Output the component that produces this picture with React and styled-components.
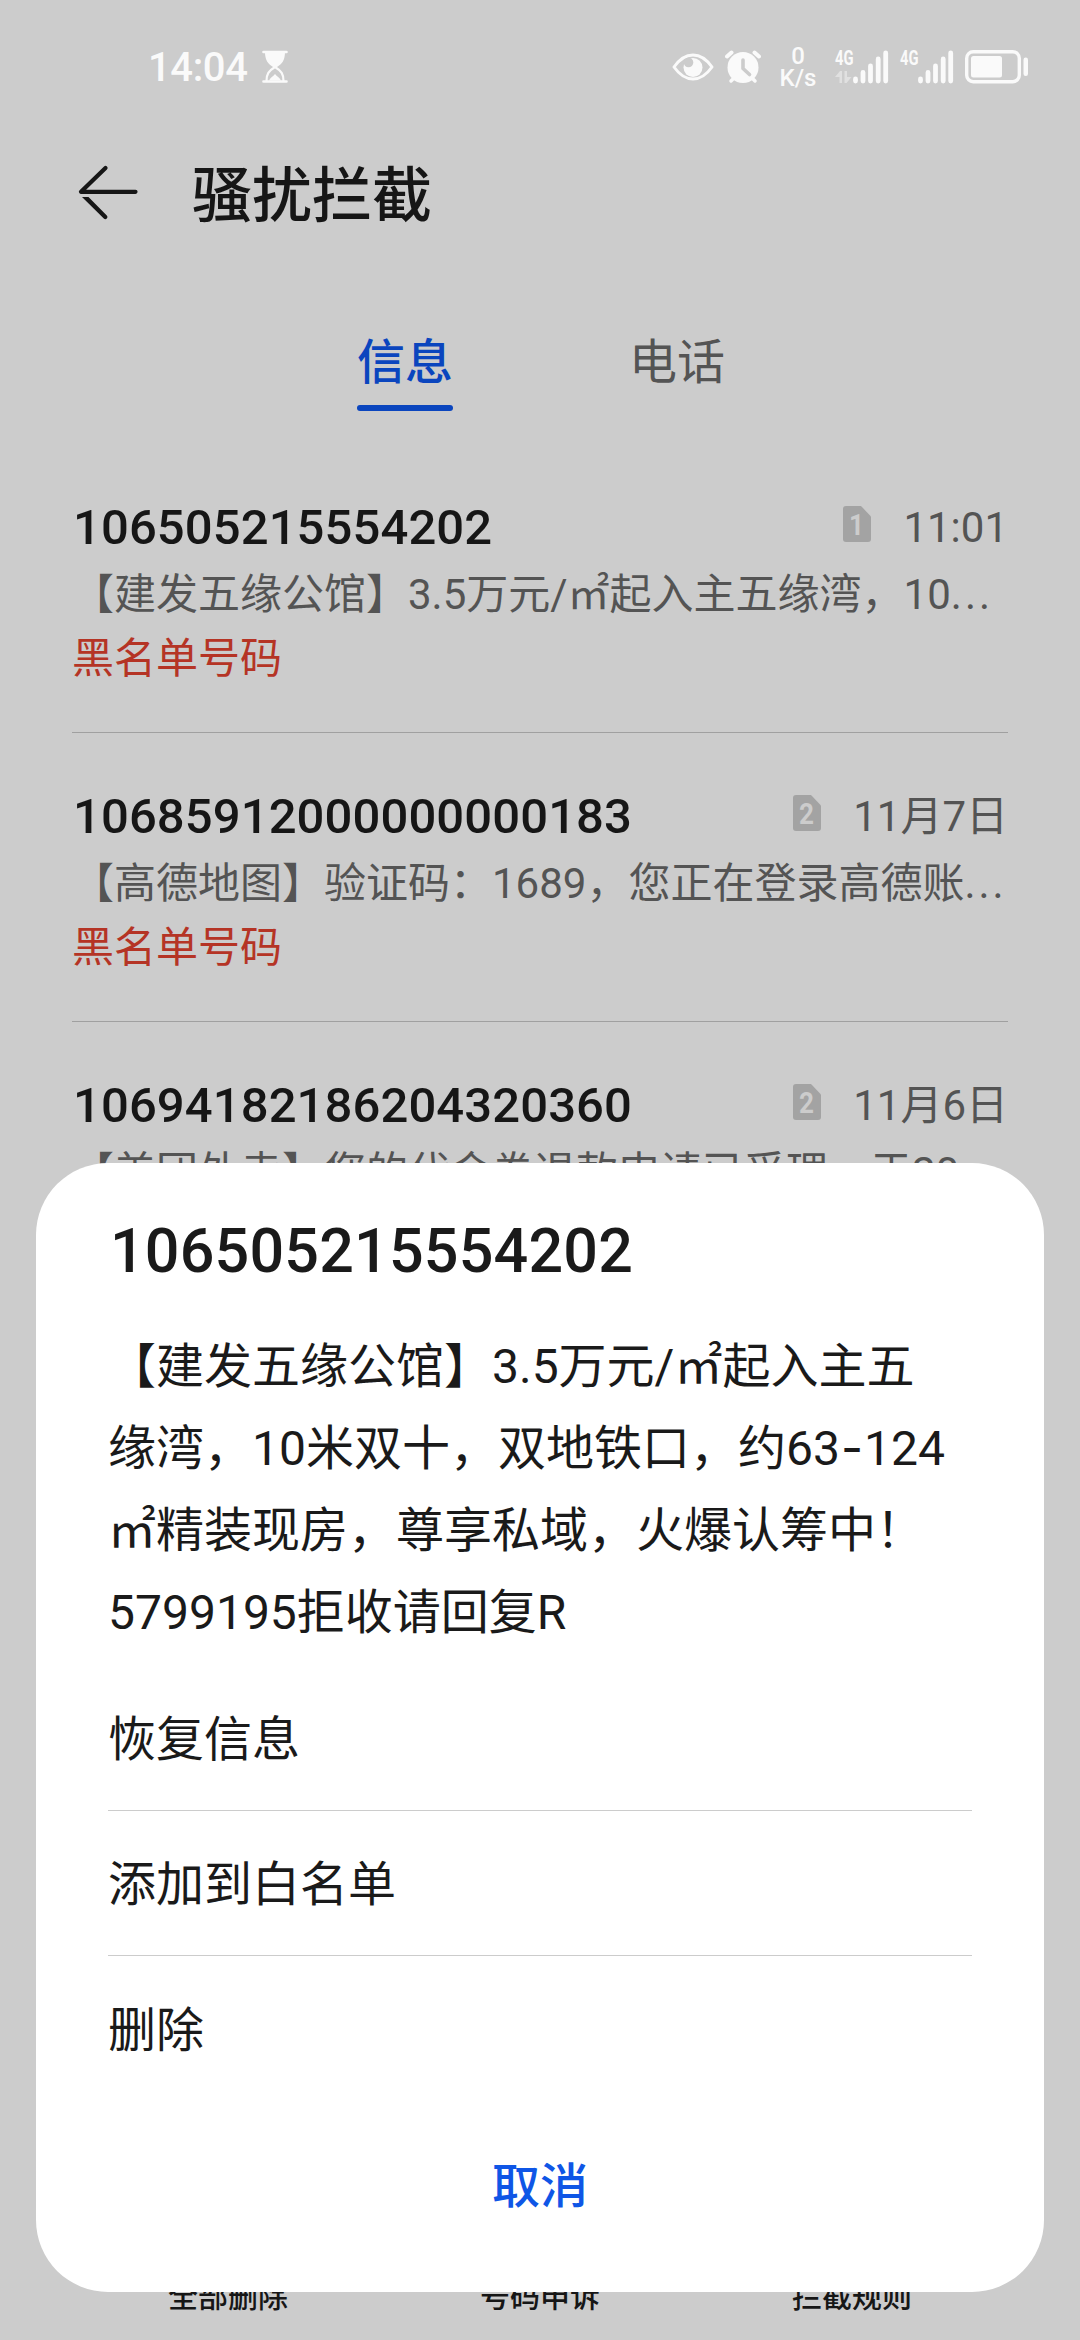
import React, { useState } from 'react'
import styled, { createGlobalStyle } from 'styled-components'

const messages = [
  {
    id: 1,
    number: '106505215554202',
    sim: 1,
    time: '11:01',
    preview: '【建发五缘公馆】3.5万元/㎡起入主五缘湾，10',
    tag: '黑名单号码',
  },
  {
    id: 2,
    number: '10685912000000000183',
    sim: 2,
    time: '11月7日',
    preview: '【高德地图】验证码：1689，您正在登录高德账',
    tag: '黑名单号码',
  },
  {
    id: 3,
    number: '10694182186204320360',
    sim: 2,
    time: '11月6日',
    preview: '【美团外卖】您的代金券退款申请已受理，于20',
    tag: '黑名单号码',
  },
]

const Hourglass = () => (
  <svg width="26" height="34" viewBox="0 0 26 34" fill="none">
    <path d="M1.5 2h23M1.5 31.5h23" stroke="#fafafa" strokeWidth="2.6" strokeLinecap="round" />
    <path d="M3 2h20c0 8-3 12-8 15h-4C6 14 3 10 3 2z" fill="#fafafa" />
    <path d="M4.5 31c0-7 2-10 8.5-14c6.5 4 8.5 7 8.5 14" stroke="#fafafa" strokeWidth="2.2" />
    <path d="M7 30.5c1.5-3 4-4 6-6.5c2 2.5 4.5 3.5 6 6.5z" fill="#fafafa" />
  </svg>
)

const Eye = () => (
  <svg width="42" height="28" viewBox="0 0 42 28" fill="none">
    <path d="M2 14C8 5.5 14 2 21 2s13 3.500 19 12c-6 8.500-12 12-19 12S8 22.500 2 14z" stroke="#fafafa" strokeWidth="3" strokeLinejoin="round" />
    <circle cx="21" cy="14.500" r="9.500" fill="#fafafa" />
    <circle cx="16.500" cy="9.500" r="4.800" fill="#cccccc" />
  </svg>
)

const Alarm = () => (
  <svg width="36" height="34" viewBox="0 0 36 34" fill="none">
    <circle cx="18" cy="17.5" r="15.5" fill="#fafafa" />
    <path d="M6 31l4-4M30 31l-4-4" stroke="#fafafa" strokeWidth="3.5" strokeLinecap="round" />
    <path d="M2 6.5L6.5 2.5M34 6.5L29.5 2.5" stroke="#fafafa" strokeWidth="4" strokeLinecap="round" />
    <path d="M18 10v8.5l6.5 6" stroke="#cccccc" strokeWidth="3.6" strokeLinecap="round" strokeLinejoin="round" />
  </svg>
)

const Signal = ({ data }) => (
  <svg width="54" height="34" viewBox="0 0 54 34" fill="none" overflow="visible">
    <text x="0" y="15" fontFamily="Roboto" fontSize="20" fontWeight="700" fill="#fafafa" textLength="18.5" lengthAdjust="spacingAndGlyphs">4G</text>
    {data && (
      <path d="M0 27l5-6h2v12H4.5v-6zM9.5 21H12v6h4.5l-5 6h-2z" fill="#e0e0e0" />
    )}
    <path d="M20.5 29v2M28 22.5V31M35.5 16v15M43.2 9v22M50.7 3v28" stroke="#fafafa" strokeWidth="4.8" strokeLinecap="round" />
  </svg>
)

const Battery = () => (
  <svg width="64" height="34" viewBox="0 0 64 34" fill="none">
    <rect x="1.7" y="1.7" width="52.6" height="30" rx="6.5" stroke="#fafafa" strokeWidth="3.4" />
    <rect x="6" y="6" width="31" height="21.5" rx="2.5" fill="#fafafa" />
    <rect x="58.5" y="7.5" width="4.5" height="18.5" rx="2.2" fill="#fafafa" />
  </svg>
)

const BackArrow = () => (
  <svg width="60" height="56" viewBox="0 0 60 56" fill="none">
    <path d="M27.5 3L3 26.8h54.5" stroke="#161616" strokeWidth="4.2" strokeLinecap="round" strokeLinejoin="round" />
    <path d="M4 32h6.5L28.8 50.5a2.1 2.1 0 0 1-3 3z" fill="#161616" />
  </svg>
)

const SimBadge = ({ slot }) => (
  <svg width="28" height="36" viewBox="0 0 28 36">
    <path d="M3 0h15l10 10.5V33a3 3 0 0 1-3 3H3a3 3 0 0 1-3-3V3a3 3 0 0 1 3-3z" fill="#a3a3a3" />
    <text x="13.5" y="29" textAnchor="middle" fontFamily="Roboto" fontSize="30" fontWeight="700" fill="#cccccc" textLength="15" lengthAdjust="spacingAndGlyphs">{slot}</text>
  </svg>
)

const App = () => {
  const [tab, setTab] = useState('信息')

  return (
    <Screen>
      <GlobalStyle />
      <StatusBar>
        <Clock>14:04</Clock>
        <Hourglass />
        <StatusIcons>
          <Eye />
          <Alarm />
          <Speed>
            <span>0</span>
            <span>K/s</span>
          </Speed>
          <Signal data />
          <Signal />
          <Battery />
        </StatusIcons>
      </StatusBar>
      <Header>
        <BackArrow />
        <PageTitle>骚扰拦截</PageTitle>
      </Header>
      <Tabs>
        {['信息', '电话'].map((name) => (
          <Tab key={name} $active={name === tab} onClick={() => setTab(name)}>{name}</Tab>
        ))}
      </Tabs>
      <List>
        {messages.map((msg) => (
          <Row key={msg.id}>
            <RowHead>
              <Sender>{msg.number}</Sender>
              <SimBadge slot={msg.sim} />
              <Time>{msg.time}</Time>
            </RowHead>
            <Preview>{msg.preview}<Dots>...</Dots></Preview>
            <Tag>{msg.tag}</Tag>
          </Row>
        ))}
      </List>
      <Toolbar>
        <ToolbarItem>全部删除</ToolbarItem>
        <ToolbarItem>号码申诉</ToolbarItem>
        <ToolbarItem>拦截规则</ToolbarItem>
      </Toolbar>
      <Sheet>
        <SheetTitle>106505215554202</SheetTitle>
        <SheetBody>
          <p>【建发五缘公馆】3.5万元/㎡起入主五</p>
          <p>缘湾，10米双十，双地铁口，约63<Hyphen>-</Hyphen>124</p>
          <p>㎡精装现房，尊享私域，火爆认筹中！</p>
          <p>5799195拒收请回复R</p>
        </SheetBody>
        <Option>恢复信息</Option>
        <Option>添加到白名单</Option>
        <Option>删除</Option>
        <Cancel>取消</Cancel>
      </Sheet>
    </Screen>
  )
}

const GlobalStyle = createGlobalStyle`
  * {
    box-sizing: border-box;
    margin: 0;
    padding: 0;
  }
  body {
    background: #cccccc;
    font-family: Roboto, "Noto Sans CJK SC", sans-serif;
  }
  button {
    border: none;
    background: none;
    font-family: inherit;
    cursor: pointer;
  }
`

const Screen = styled.div`
  position: relative;
  display: flex;
  flex-direction: column;
  width: 1080px;
  height: 2340px;
  overflow: hidden;
  background: #cccccc;
  color: #161616;
`

const StatusBar = styled.div`
  display: flex;
  align-items: center;
  height: 134px;
  padding: 0 51px 0 148px;
`

const Clock = styled.span`
  width: 114px;
  padding-top: 2px;
  font-size: 40px;
  font-weight: 500;
  letter-spacing: -0.4px;
  line-height: 48px;
  color: #fafafa;
`

const StatusIcons = styled.div`
  display: flex;
  align-items: center;
  gap: 11px;
  margin-left: auto;
`

const Speed = styled.div`
  display: flex;
  flex-direction: column;
  align-items: center;
  width: 52px;
  font-size: 24px;
  font-weight: 500;
  line-height: 22px;
  color: #fafafa;
`

const Header = styled.header`
  display: flex;
  align-items: center;
  gap: 54px;
  height: 120px;
  padding-left: 78px;
  svg {
    margin-bottom: 2px;
  }
`

const PageTitle = styled.h1`
  padding-top: 5px;
  font-size: 60px;
  font-weight: 500;
  line-height: 80px;
`

const Tabs = styled.nav`
  display: flex;
  justify-content: center;
  gap: 176px;
  padding: 75px 0 0 2px;
`

const Tab = styled.button`
  position: relative;
  height: 82px;
  padding: 2px 0 16px;
  font-size: 48px;
  font-weight: ${({ $active }) => ($active ? 500 : 400)};
  line-height: 64px;
  color: ${({ $active }) => ($active ? '#0a45be' : '#545454')};
  &::after {
    content: '';
    position: absolute;
    left: 0;
    right: 0;
    bottom: 0;
    height: 6px;
    border-radius: 3px;
    background: ${({ $active }) => ($active ? '#0a45be' : 'transparent')};
  }
`

const List = styled.div`
  display: flex;
  flex-direction: column;
  height: 1866px;
  padding: 33px 72px 0;
`

const Row = styled.div`
  flex: none;
  height: 289px;
  padding-top: 56px;
  border-bottom: 1px solid #a0a0a0;
  white-space: nowrap;
`

const RowHead = styled.div`
  display: flex;
  margin-bottom: 8px;
  svg {
    margin: 6px 32px 0 0;
  }
`

const Sender = styled.span`
  flex: 1;
  padding-left: 1px;
  font-size: 49px;
  font-weight: 500;
  letter-spacing: 0.1px;
  line-height: 56px;
`

const Time = styled.span`
  font-size: 42px;
  line-height: 56px;
  color: #545454;
`

const Preview = styled.p`
  font-size: 42px;
  line-height: 62px;
  color: #545454;
`

const Dots = styled.span`
  letter-spacing: 3px;
`

const Tag = styled.p`
  font-size: 42px;
  line-height: 65px;
  color: #b53425;
`

const Toolbar = styled.footer`
  display: grid;
  grid-template-columns: repeat(3, 1fr);
  padding: 0 72px;
`

const ToolbarItem = styled.span`
  font-size: 30px;
  font-weight: 500;
  line-height: 40px;
  text-align: center;
`

const Sheet = styled.section`
  position: absolute;
  left: 36px;
  right: 36px;
  bottom: 48px;
  display: flex;
  flex-direction: column;
  height: 1129px;
  padding: 48px 72px 0;
  border-radius: 72px;
  background: #ffffff;
  color: #1a1a1a;
`

const SheetTitle = styled.h2`
  padding-left: 2px;
  font-size: 61px;
  font-weight: 500;
  letter-spacing: 0.2px;
  line-height: 80px;
`

const SheetBody = styled.div`
  margin: 35px 0 12px;
  font-size: 48px;
  line-height: 82px;
  white-space: nowrap;
`

const Hyphen = styled.span`
  padding: 0 1px;
  font-family: Inter, sans-serif;
  line-height: 1;
`

const Option = styled.button`
  height: 145px;
  padding-top: 4px;
  border-bottom: 1px solid #cccccc;
  font-size: 48px;
  line-height: 140px;
  text-align: left;
  color: #1a1a1a;
  &:nth-of-type(3) {
    border-bottom: none;
  }
`

const Cancel = styled.button`
  height: 170px;
  padding-top: 2px;
  font-size: 48px;
  font-weight: 500;
  line-height: 168px;
  color: #0f56e6;
`

export default App
